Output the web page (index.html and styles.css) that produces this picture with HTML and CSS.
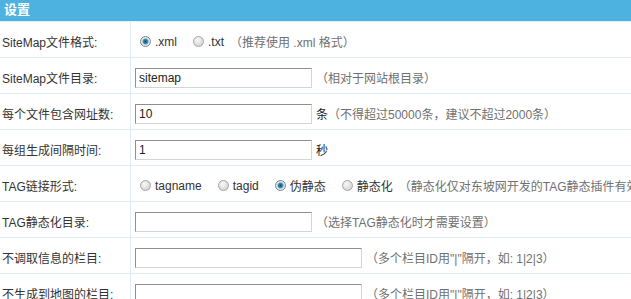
FILE: index.html
```html
<!DOCTYPE html>
<html lang="zh-CN">
<head>
  <meta charset="UTF-8" />
  <title>设置</title>
  <link rel="stylesheet" href="styles.css">
</head>
<body>
  <div class="panel">
    <div class="panel-title">设置</div>

    <div class="row">
      <div class="label">SiteMap文件格式:</div>
      <div class="field">
        <label class="opt"><input type="radio" name="fmt" checked>.xml</label>
        <label class="opt"><input type="radio" name="fmt">.txt</label>
        <span class="tip">（推荐使用 .xml 格式）</span>
      </div>
    </div>

    <div class="row">
      <div class="label">SiteMap文件目录:</div>
      <div class="field">
        <input type="text" class="txt" value="sitemap">
        <span class="tip">（相对于网站根目录）</span>
      </div>
    </div>

    <div class="row">
      <div class="label">每个文件包含网址数:</div>
      <div class="field">
        <input type="text" class="txt" value="10">
        <span class="unit">条</span>
        <span class="tip">（不得超过50000条，建议不超过2000条）</span>
      </div>
    </div>

    <div class="row">
      <div class="label">每组生成间隔时间:</div>
      <div class="field">
        <input type="text" class="txt" value="1">
        <span class="unit">秒</span>
      </div>
    </div>

    <div class="row">
      <div class="label">TAG链接形式:</div>
      <div class="field">
        <label class="opt"><input type="radio" name="tag">tagname</label>
        <label class="opt"><input type="radio" name="tag">tagid</label>
        <label class="opt"><input type="radio" name="tag" checked>伪静态</label>
        <label class="opt"><input type="radio" name="tag">静态化</label>
        <span class="tip">（静态化仅对东坡网开发的TAG静态插件有效）</span>
      </div>
    </div>

    <div class="row">
      <div class="label">TAG静态化目录:</div>
      <div class="field">
        <input type="text" class="txt" value="">
        <span class="tip">（选择TAG静态化时才需要设置）</span>
      </div>
    </div>

    <div class="row">
      <div class="label">不调取信息的栏目:</div>
      <div class="field">
        <input type="text" class="txt wide" value="">
        <span class="tip">（多个栏目ID用"|"隔开，如: 1|2|3）</span>
      </div>
    </div>

    <div class="row">
      <div class="label">不生成到地图的栏目:</div>
      <div class="field">
        <input type="text" class="txt wide" value="">
        <span class="tip">（多个栏目ID用"|"隔开，如: 1|2|3）</span>
      </div>
    </div>
  </div>
</body>
</html>
```

FILE: styles.css
```css
body {
  margin: 0;
  background: #fff;
  font-family: "Liberation Sans", "Noto Sans CJK SC", sans-serif;
  font-size: 12px;
  color: #333;
  overflow: hidden;
}
.panel {
  width: 100%;
  white-space: nowrap;
}
.panel-title {
  height: 21px;
  line-height: 20px;
  background: #4db2df;
  color: #fff;
  font-weight: bold;
  font-size: 13px;
  padding-left: 4px;
  border-bottom: 1px solid #e3f0f7;
}
.row {
  display: grid;
  grid-template-columns: 131px 1fr;
  height: 35px;
  border-bottom: 1px solid #deedf5;
}
.label {
  display: flex;
  align-items: center;
  padding-left: 2px;
  padding-top: 4px;
  border-right: 1px solid #deedf5;
}
.field {
  display: flex;
  align-items: center;
  padding-left: 4px;
  padding-top: 4px;
  overflow: hidden;
}
.txt {
  width: 169px;
  height: 16px;
  margin: 0;
  padding: 1px 3px;
  font: 12px "Liberation Sans", "Noto Sans CJK SC", sans-serif;
  color: #222;
  border: 1px solid;
  border-color: #8f8f8f #d4d4d4 #d4d4d4 #8f8f8f;
  outline: none;
}
.txt.wide {
  width: 219px;
}
.unit {
  margin-left: 4px;
  color: #222;
}
.tip {
  margin-left: 4px;
  color: #707070;
}
.unit + .tip {
  margin-left: 0;
}
.opt {
  display: flex;
  align-items: center;
  margin-right: 11px;
  color: #333;
}
.opt + .tip {
  margin-left: -5px;
}
.opt input {
  appearance: none;
  -webkit-appearance: none;
  width: 11px;
  height: 11px;
  margin: 0 4px 0 5px;
  border-radius: 50%;
  border: 1px solid #a6a6a6;
  background: radial-gradient(circle at 40% 35%, #fafafa 0%, #dcdcdc 60%, #c4c4c4 100%);
}
.opt input:checked {
  background: radial-gradient(circle at 50% 50%, #1b4f6e 0%, #2d7fa6 30%, #4aa0c6 40%, #e8e8e8 55%, #cfcfcf 100%);
  border-color: #7b8a94;
}
```
